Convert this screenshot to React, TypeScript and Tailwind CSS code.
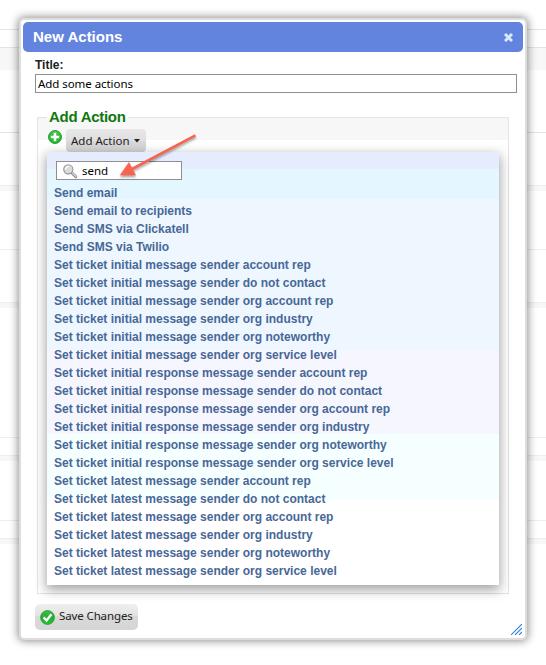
import React from 'react';

const actions = [
  'Send email',
  'Send email to recipients',
  'Send SMS via Clickatell',
  'Send SMS via Twilio',
  'Set ticket initial message sender account rep',
  'Set ticket initial message sender do not contact',
  'Set ticket initial message sender org account rep',
  'Set ticket initial message sender org industry',
  'Set ticket initial message sender org noteworthy',
  'Set ticket initial message sender org service level',
  'Set ticket initial response message sender account rep',
  'Set ticket initial response message sender do not contact',
  'Set ticket initial response message sender org account rep',
  'Set ticket initial response message sender org industry',
  'Set ticket initial response message sender org noteworthy',
  'Set ticket initial response message sender org service level',
  'Set ticket latest message sender account rep',
  'Set ticket latest message sender do not contact',
  'Set ticket latest message sender org account rep',
  'Set ticket latest message sender org industry',
  'Set ticket latest message sender org noteworthy',
  'Set ticket latest message sender org service level',
];

function Backdrop() {
  return (
    <div className="flex h-full w-full flex-col bg-white">
      <div className="h-[30px] border-b border-[#e4e4e4]" />
      <div className="h-[18px] border-b border-[#e4e4e4]" />
      <div className="h-[22px] bg-[#f7f7f7]" />
      <div className="h-[63px] border-b border-[#e4e4e4]" />
      <div className="h-[52px]" />
      <div className="h-[6px] border-t border-[#eeeeee] bg-[#f7f7f7]" />
      <div className="h-[59px] border-b border-[#eeeeee]" />
      <div className="h-[52px]" />
      <div className="h-[6px] border-t border-[#eeeeee] bg-[#f7f7f7]" />
      <div className="h-[130px] border-b border-[#eeeeee]" />
      <div className="h-[17px]" />
      <div className="h-[6px] border-t border-[#eeeeee] bg-[#f7f7f7]" />
      <div className="h-[60px] border-b border-[#eeeeee]" />
      <div className="h-[17px]" />
      <div className="h-[6px] border-t border-[#eeeeee] bg-[#f7f7f7]" />
    </div>
  );
}

function PlusIcon() {
  return (
    <svg className="h-[14px] w-[14px]" viewBox="0 0 14 14">
      <defs>
        <linearGradient id="plus" x1="0" y1="0" x2="0" y2="1">
          <stop offset="0" stopColor="#4ac553" />
          <stop offset="0.5" stopColor="#2eb53a" />
          <stop offset="1" stopColor="#16bf25" />
        </linearGradient>
      </defs>
      <circle cx="7" cy="7" r="6.5" fill="url(#plus)" stroke="#1c9a2b" strokeWidth="0.9" />
      <path d="M5.7 2.8h2.6v2.9h2.9v2.6H8.3v2.9H5.7V8.3H2.8V5.7h2.9z" fill="#fff" />
    </svg>
  );
}

function CheckIcon() {
  return (
    <svg className="h-[15px] w-[15px] shrink-0" viewBox="0 0 15 15">
      <defs>
        <linearGradient id="check" x1="0" y1="0" x2="0" y2="1">
          <stop offset="0" stopColor="#45bb4c" />
          <stop offset="0.5" stopColor="#27ab33" />
          <stop offset="1" stopColor="#1fc92d" />
        </linearGradient>
      </defs>
      <circle cx="7.5" cy="7.5" r="6.9" fill="url(#check)" stroke="#219a2d" strokeWidth="0.8" />
      <path d="M3.6 7.4l3 3.1L11.4 4.3" fill="none" stroke="#fff" strokeWidth="2.3" />
    </svg>
  );
}

function SearchIcon() {
  return (
    <svg className="h-4 w-4" viewBox="0 0 16 16">
      <path d="M9.8 9.8l4 4" stroke="#8a8a8a" strokeWidth="3" strokeLinecap="round" />
      <path d="M10 9.6l3.8 3.8" stroke="#d2d2d2" strokeWidth="1.4" strokeLinecap="round" />
      <circle cx="6.3" cy="6.3" r="4.6" fill="#dadada" stroke="#949494" strokeWidth="1.1" />
      <path d="M3.6 6.4a2.8 2.8 0 0 1 3.2-2.8" stroke="#fff" strokeWidth="1.4" fill="none" />
    </svg>
  );
}

function ActionMenu() {
  return (
    <div className="relative h-[433px] w-[452px] bg-[linear-gradient(to_bottom,#e4ecfe_17px,#e4f6ff_17px,#e4f6ff_47px,#eef7ff_47px,#eef7ff_198px,#f6f6ff_198px,#f6f6ff_282px,#f6ffff_282px,#f6ffff_348px,#ffffff_348px)] pt-[9px] shadow-[0_4px_11px_1px_rgba(0,0,0,0.36)]">
      <div className="ml-[9px] flex h-[19px] w-[126px] items-center border border-[#8f8f8f] bg-white pl-[5px]">
        <SearchIcon />
        <span className="ml-[4px] font-['Noto_Sans',sans-serif] text-[11.5px] leading-[17px] text-black">send</span>
      </div>
      <ul className="mt-[4px] pl-[7px] font-['Liberation_Sans',sans-serif] text-[12px] font-bold leading-[18px] text-[#486797]">
        {actions.map((label) => (
          <li key={label} className="h-[18px] whitespace-nowrap">{label}</li>
        ))}
      </ul>
    </div>
  );
}

function PointerArrow() {
  return (
    <svg className="absolute left-[110px] top-[125px] h-[60px] w-[95px] drop-shadow-[0_2px_1px_rgba(0,0,0,0.35)]" viewBox="110 125 95 60">
      <path d="M195.5 135.3L132 169" stroke="#f9634f" strokeWidth="2.6" />
      <path d="M119.8 175.3L129 162L136 175.3z" fill="#f9634f" />
    </svg>
  );
}

export default function App() {
  return (
    <div className="relative h-[665px] w-[546px] overflow-hidden bg-white">
      <Backdrop />
      <section className="absolute left-[19px] top-[18px] h-[622px] w-[508px] rounded-[5px] border-2 border-[#dddddd] bg-white p-[2px] shadow-[0_0_9px_1px_rgba(0,0,0,0.45)]">
        <header className="flex h-[30px] items-center justify-between rounded-[5px] bg-[#6284de] px-[10px]">
          <h1 className="font-['Liberation_Sans',sans-serif] text-[15px] font-bold leading-[30px] text-white">New Actions</h1>
          <svg className="h-[9px] w-[9px]" viewBox="0 0 9 9">
            <path d="M1 1l7 7M8 1L1 8" stroke="#d9ebfb" strokeWidth="3" />
          </svg>
        </header>
        <div className="flex flex-col px-3">
          <label className="mt-[5px] h-[17px] font-['Liberation_Sans',sans-serif] text-[12px] font-bold leading-[16px] text-[#222]">Title:</label>
          <div className="h-[19px] w-[482px] border border-[#8f8f8f] pl-[2px] font-['Noto_Sans',sans-serif] text-[11.5px] leading-[18px] tracking-[-0.06px] text-black">
            Add some actions
          </div>
          <div className="ml-[2px] mt-[24px] h-[477px] w-[472px] border border-[#e4e4e4] bg-[linear-gradient(to_bottom,#f7f7f7_22px,#ffffff_22px)] px-[9px]">
            <h2 className="-mt-[10px] h-[20px] w-[81px] bg-[linear-gradient(to_bottom,#ffffff_10px,#f7f7f7_10px)] pl-[2px] font-['Liberation_Sans',sans-serif] text-[15px] font-bold leading-[18px] tracking-[-0.28px] text-[#117711]"><span className="whitespace-nowrap">Add Action</span></h2>
            <div className="flex h-[24px] items-start">
              <div className="ml-[1px] mt-[2px]"><PlusIcon /></div>
              <button className="ml-[4px] mt-[1px] flex h-[23px] w-[80px] items-center rounded-[4px] bg-[linear-gradient(to_bottom,#e7e7e7,#dfdfdf_50%,#d8d8d8_50%,#d5d5d5)] pl-[5px] font-['Noto_Sans',sans-serif] text-[11.5px] leading-[18px] text-[#222]">
                <span className="whitespace-nowrap">Add Action</span>
                <svg className="ml-[4px] h-[4px] w-[6px] shrink-0" viewBox="0 0 6 4"><path d="M0 0h6L3 3.5z" fill="#222" /></svg>
              </button>
            </div>
            <ActionMenu />
          </div>
          <button className="mt-[10px] flex h-[26px] w-[103px] items-center rounded-[5px] bg-[linear-gradient(to_bottom,#efefef,#e2e2e2_46%,#d9d9d9_46%,#d5d5d5)] pl-[5px] font-['Noto_Sans',sans-serif] text-[11.5px] leading-[18px] tracking-[-0.12px] text-[#222]">
            <CheckIcon />
            <span className="ml-[4px] whitespace-nowrap pb-[2px]">Save Changes</span>
          </button>
        </div>
        <svg className="absolute bottom-[3px] right-[3px] h-[11px] w-[11px]" viewBox="0 0 11 11">
          <path d="M0 11L11 0M4 11l7-7M8 11l3-3" stroke="#2f83cc" strokeWidth="1.1" />
        </svg>
      </section>
      <PointerArrow />
    </div>
  );
}
